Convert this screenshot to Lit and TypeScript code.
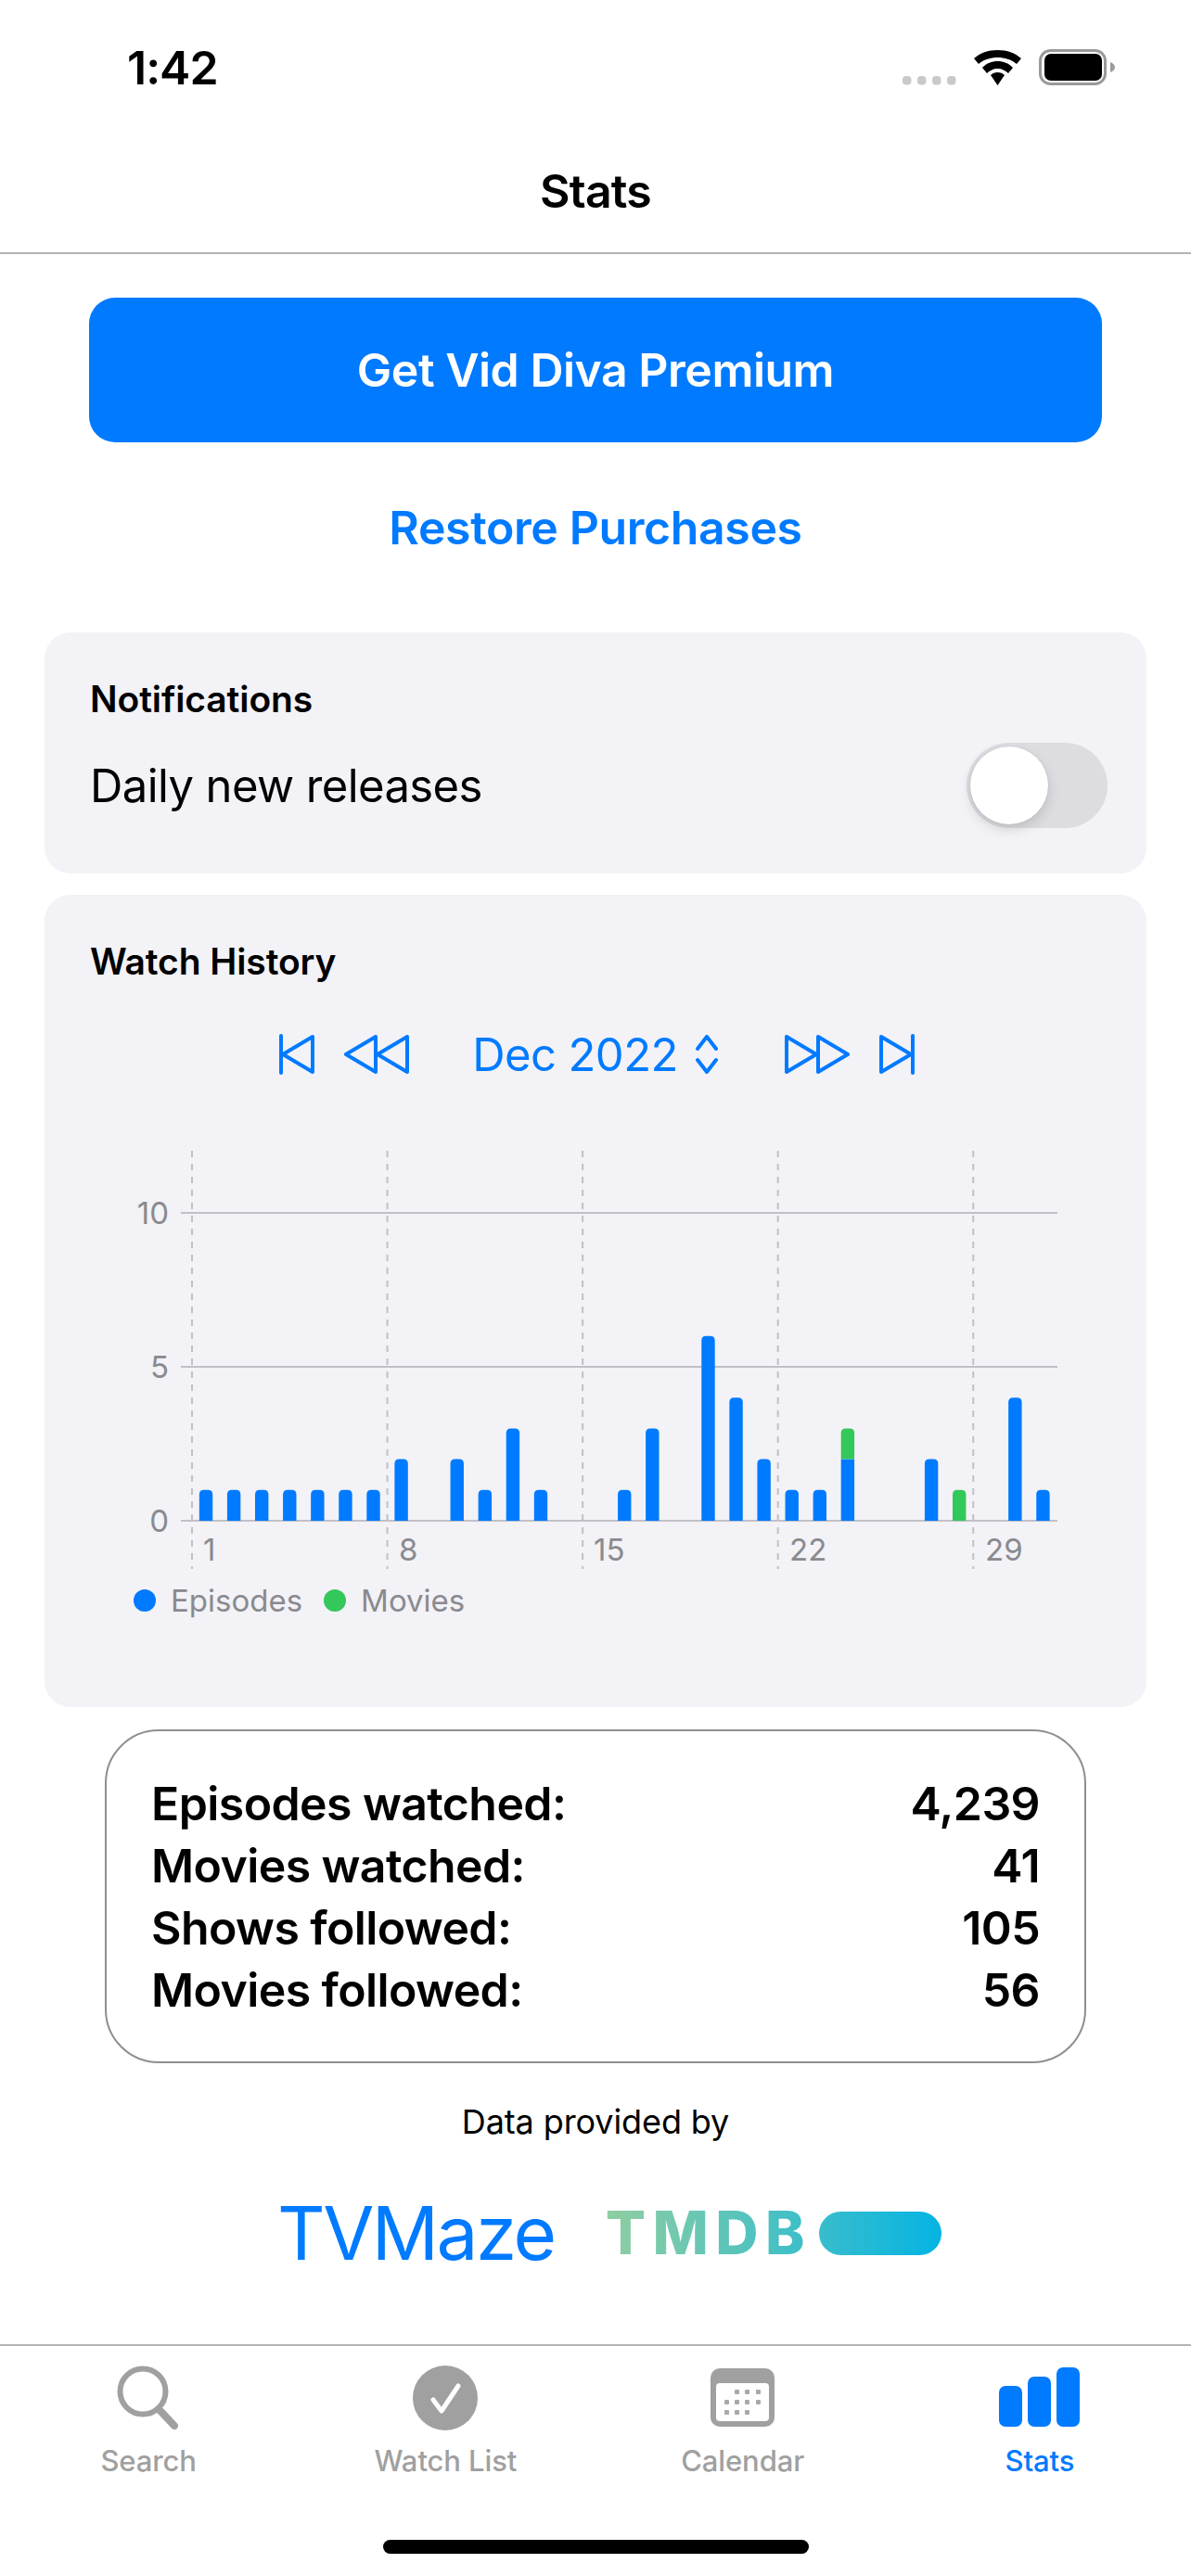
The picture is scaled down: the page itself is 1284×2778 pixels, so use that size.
import { LitElement, css, html, svg } from "lit";
import { customElement } from "lit/decorators.js";

// episodes / movies per day of December
const DAYS: [number, number][] = [
  [1, 0], [1, 0], [1, 0], [1, 0], [1, 0], [1, 0], [1, 0], [2, 0], [0, 0], [2, 0],
  [1, 0], [3, 0], [1, 0], [0, 0], [0, 0], [1, 0], [3, 0], [0, 0], [6, 0], [4, 0],
  [2, 0], [1, 0], [1, 0], [2, 1], [0, 0], [0, 0], [2, 0], [0, 1], [0, 0], [4, 0], [1, 0],
];

const TOTALS = [
  ["Episodes watched:", "4,239"],
  ["Movies watched:", "41"],
  ["Shows followed:", "105"],
  ["Movies followed:", "56"],
];

// chart geometry, svg origin sits at 130,1240 of the page
const UNIT = 33.2;
const BASE = 400;
const LEFT = 77;
const STEP = 30.08;
const BAR = 14.4;

function topRounded(x: number, y: number, h: number) {
  const r = 5;
  return `M${x} ${y + h}V${y + r}Q${x} ${y} ${x + r} ${y}H${x + BAR - r}Q${x + BAR} ${y} ${x + BAR} ${y + r}V${y + h}Z`;
}

@customElement("app-root")
export class AppRoot extends LitElement {
  static styles = css`
    :host {
      display: flex;
      flex-direction: column;
      width: 1284px;
      height: 2778px;
      background: #fff;
      color: #000;
      font-family: Inter, "Liberation Sans", sans-serif;
    }
    .status {
      display: flex;
      justify-content: space-between;
      align-items: flex-start;
      height: 176px;
      padding: 45px 81px 0 137px;
      box-sizing: border-box;
    }
    .time {
      font-size: 50px;
      font-weight: 600;
      line-height: 56px;
      letter-spacing: -1px;
    }
    .status-icons {
      display: block;
      margin-top: 8px;
    }
    .title {
      height: 99px;
      box-sizing: border-box;
      border-bottom: 2px solid #b4b4b6;
      text-align: center;
      font-size: 50px;
      font-weight: 600;
      line-height: 62px;
      margin-top: -1px;
      letter-spacing: -0.8px;
    }
    main {
      flex: 1;
      display: flex;
      flex-direction: column;
      padding: 47px 48px 0;
    }
    .premium {
      margin: 0 48px;
      height: 156px;
      border-radius: 28px;
      background: #007aff;
      color: #fff;
      display: flex;
      align-items: center;
      justify-content: center;
      font-size: 50px;
      font-weight: 600;
      letter-spacing: -0.5px;
    }
    .restore {
      margin-top: 62px;
      height: 60px;
      line-height: 60px;
      text-align: center;
      color: #007aff;
      font-size: 50px;
      font-weight: 600;
      letter-spacing: -0.4px;
    }
    .card {
      background: #f2f2f7;
      border-radius: 28px;
      box-sizing: border-box;
    }
    .notif {
      margin-top: 83px;
      height: 260px;
      padding: 50px 42px 0 49px;
    }
    .card-title {
      font-size: 39px;
      font-weight: 560;
      line-height: 44px;
      letter-spacing: -0.1px;
    }
    .notif-row {
      display: flex;
      justify-content: space-between;
      align-items: center;
      margin-top: 25px;
      font-size: 49px;
      letter-spacing: -0.6px;
    }
    .toggle {
      width: 152px;
      height: 92px;
      border-radius: 46px;
      background: #dcdce1;
      padding: 4px;
      box-sizing: border-box;
    }
    .thumb {
      width: 84px;
      height: 84px;
      border-radius: 50%;
      background: #fff;
      box-shadow: 0 6px 14px rgba(0, 0, 0, 0.13), 0 0 2px rgba(0, 0, 0, 0.1);
    }
    .history {
      margin-top: 23px;
      height: 876px;
      padding: 50px 0 0 49px;
    }
    .month {
      display: flex;
      align-items: center;
      justify-content: center;
      margin: 54px 0 0 -49px;
      padding-left: 3px;
      height: 48px;
      color: #007aff;
      font-size: 49px;
      letter-spacing: -0.6px;
    }
    .month svg {
      display: block;
      fill: none;
      stroke: #007aff;
      stroke-width: 4;
      stroke-linecap: round;
      stroke-linejoin: round;
    }
    .gap-s { margin-left: 31px; }
    .gap-l { margin-left: 68px; }
    .gap-c { margin-left: 18px; }
    .gap-r { margin-left: 71px; }
    .chart {
      display: block;
      margin: 79px 0 0 33px;
    }
    .chart text {
      font-family: Inter, "Liberation Sans", sans-serif;
      font-size: 33px;
      fill: #8a8a8e;
    }
    .legend {
      display: flex;
      align-items: center;
      margin: 12px 0 0 47px;
      height: 40px;
      color: #8a8a8e;
      font-size: 33px;
    }
    .dot {
      width: 24px;
      height: 24px;
      border-radius: 50%;
      margin-right: 16px;
    }
    .dot.ep { background: #007aff; }
    .dot.mov { background: #34c759; margin-left: 23px; }
    .totals {
      margin: 24px 65px 0 65px;
      height: 360px;
      box-sizing: border-box;
      border: 2px solid #8e8e93;
      border-radius: 58px;
      padding: 45px 48px 0 48px;
      font-size: 50px;
      font-weight: 600;
      letter-spacing: -0.6px;
      line-height: 67px;
    }
    .total {
      display: flex;
      justify-content: space-between;
    }
    .credit {
      margin-top: 41px;
      text-align: center;
      font-size: 36px;
      line-height: 44px;
      letter-spacing: -0.1px;
    }
    .logos {
      display: flex;
      align-items: center;
      margin: 50px 0 0 251px;
    }
    .tvmaze {
      color: #007aff;
      font-size: 80px;
      line-height: 96px;
      letter-spacing: -2.5px;
    }
    .tmdb {
      display: flex;
      align-items: center;
      margin-left: 55px;
      background: linear-gradient(90deg, #90cea1, #3cbec9 60%, #00b3e5);
      -webkit-background-clip: text;
      background-clip: text;
      color: transparent;
      font-size: 64px;
      font-weight: 800;
      letter-spacing: 7.5px;
      line-height: 48px;
    }
    .pill {
      width: 132px;
      height: 47px;
      border-radius: 24px;
      margin-left: 8px;
      background: linear-gradient(90deg, #38bdcc, #04b4e3);
    }
    .tabs {
      display: grid;
      grid-template-columns: repeat(4, 1fr);
      height: 250px;
      box-sizing: border-box;
      border-top: 2px solid #b4b4b6;
      padding-right: 3px;
      position: relative;
    }
    .tab {
      display: flex;
      flex-direction: column;
      align-items: center;
      color: #a0a0a0;
      font-size: 31px;
      font-weight: 500;
      letter-spacing: -0.1px;
    }
    .tab.on { color: #007aff; }
    .tab .icon {
      height: 72px;
      margin-top: 20px;
      display: block;
    }
    .tab span {
      margin-top: 12px;
      line-height: 40px;
    }
    .home {
      position: absolute;
      left: 413px;
      top: 209px;
      width: 459px;
      height: 15px;
      border-radius: 8px;
      background: #000;
    }
  `;

  chart() {
    return html`<svg class="chart" width="1020" height="454" viewBox="0 0 1020 454">
      ${[0, 7, 14, 21, 28].map((d) => {
        const x = LEFT + d * STEP;
        return svg`<line x1=${x} x2=${x} y1="1" y2="452" stroke="#c0c0c5" stroke-width="2" stroke-dasharray="7 7"/>`;
      })}
      ${[0, 5, 10].map((v) => {
        const y = BASE - v * UNIT;
        return svg`<line x1="65" x2="1010" y1=${y} y2=${y} stroke="#c0c0c6" stroke-width="2"/>
          <text x="52" y=${y + 12} text-anchor="end">${v}</text>`;
      })}
      ${DAYS.map(([ep, mov], i) => {
        const x = LEFT + (i + 0.5) * STEP - BAR / 2;
        const total = ep + mov;
        if (!total) return null;
        const y = BASE - total * UNIT;
        if (!mov) return svg`<path d=${topRounded(x, y, ep * UNIT)} fill="#007aff"/>`;
        if (!ep) return svg`<path d=${topRounded(x, y, mov * UNIT)} fill="#34c759"/>`;
        return svg`<path d=${topRounded(x, y, mov * UNIT)} fill="#34c759"/>
          <rect x=${x} y=${y + mov * UNIT} width=${BAR} height=${ep * UNIT} fill="#007aff"/>`;
      })}
      ${[[1, 89], [8, 300], [15, 510], [22, 721], [29, 932]].map(
        ([d, x]) => svg`<text x=${x} y="443">${d}</text>`
      )}
    </svg>`;
  }

  render() {
    return html`
      <div class="status">
        <div class="time">1:42</div>
        <svg class="status-icons" width="232" height="42" viewBox="0 0 232 42">
          <g fill="#c9c9c9">
            <rect x="2" y="29" width="9.500" height="9.500" rx="4"/>
            <rect x="18" y="29" width="9.500" height="9.500" rx="4"/>
            <rect x="34" y="29" width="9.500" height="9.500" rx="4"/>
            <rect x="50" y="29" width="9.500" height="9.500" rx="4"/>
          </g>
          <g fill="#000">
            <path d="M104.500 1C94 1 86 4 79 10L84 16C90 11 97 9 104.500 9C112 9 119 11 125 16L130 10C123 4 115 1 104.500 1Z"/>
            <path d="M104.500 13C98 13 93 15 88 20L93 26C96 23 100 21 104.500 21C109 21 113 23 116 26L121 20C116 15 111 13 104.500 13Z"/>
            <path d="M104.500 25C101.500 25 99 26 97 28L104.500 39L112 28C110 26 107.500 25 104.500 25Z"/>
          </g>
          <rect x="150.500" y="1.500" width="70" height="36" rx="11" fill="none" stroke="#9a9a9a" stroke-width="3"/>
          <rect x="155" y="5" width="62" height="29" rx="7" fill="#000"/>
          <path d="M226 14C229 15 231 17 231 19.500C231 22 229 24 226 25Z" fill="#9a9a9a"/>
        </svg>
      </div>
      <div class="title">Stats</div>
      <main>
        <div class="premium">Get Vid Diva Premium</div>
        <div class="restore">Restore Purchases</div>
        <section class="card notif">
          <div class="card-title">Notifications</div>
          <div class="notif-row">
            <span>Daily new releases</span>
            <div class="toggle"><div class="thumb"></div></div>
          </div>
        </section>
        <section class="card history">
          <div class="card-title">Watch History</div>
          <div class="month">
            <svg width="39" height="44" viewBox="0 0 39 44"><path d="M2 2V42M36 3V41L4 22Z"/></svg>
            <svg class="gap-s" width="70" height="44" viewBox="0 0 70 44"><path d="M34 3V41L2 22ZM68 3V41L36 22Z"/></svg>
            <span class="gap-l">Dec 2022</span>
            <svg class="gap-c" width="26" height="42" viewBox="0 0 26 42"><path d="M3 15L13 2L23 15M3 27L13 40L23 27"/></svg>
            <svg class="gap-r" width="70" height="44" viewBox="0 0 70 44"><path d="M2 3V41L34 22ZM36 3V41L68 22Z"/></svg>
            <svg class="gap-s" width="39" height="44" viewBox="0 0 39 44"><path d="M37 2V42M3 3V41L35 22Z"/></svg>
          </div>
          ${this.chart()}
          <div class="legend">
            <i class="dot ep"></i><span>Episodes</span>
            <i class="dot mov"></i><span>Movies</span>
          </div>
        </section>
        <section class="totals">
          ${TOTALS.map(([k, v]) => html`<div class="total"><span>${k}</span><span>${v}</span></div>`)}
        </section>
        <div class="credit">Data provided by</div>
        <div class="logos">
          <span class="tvmaze">TVMaze</span>
          <div class="tmdb">TMDB<i class="pill"></i></div>
        </div>
      </main>
      <nav class="tabs">
        <div class="tab">
          <svg class="icon" width="70" height="72" viewBox="0 0 70 72" fill="none" stroke="#a0a0a0">
            <circle cx="29" cy="29" r="24.500" stroke-width="6"/>
            <path d="M46 48L63 66" stroke-width="8" stroke-linecap="round"/>
          </svg>
          <span>Search</span>
        </div>
        <div class="tab">
          <svg class="icon" width="70" height="72" viewBox="0 0 70 72">
            <circle cx="35" cy="36" r="35" fill="#a0a0a0"/>
            <path d="M22 38L31 50L49 23" fill="none" stroke="#fff" stroke-width="5" stroke-linecap="round" stroke-linejoin="round"/>
          </svg>
          <span>Watch List</span>
        </div>
        <div class="tab">
          <svg class="icon" width="70" height="72" viewBox="0 0 70 72">
            <rect x="0" y="4" width="69" height="63" rx="10" fill="#a0a0a0"/>
            <rect x="6" y="20" width="57" height="41" rx="4" fill="#fff"/>
            <g fill="#a9a9a9">
              <rect x="26" y="27" width="5" height="5" rx="1"/><rect x="37" y="27" width="5" height="5" rx="1"/><rect x="49" y="27" width="5" height="5" rx="1"/>
              <rect x="15" y="38" width="5" height="5" rx="1"/><rect x="26" y="38" width="5" height="5" rx="1"/><rect x="37" y="38" width="5" height="5" rx="1"/><rect x="49" y="38" width="5" height="5" rx="1"/>
              <rect x="15" y="49" width="5" height="5" rx="1"/><rect x="26" y="49" width="5" height="5" rx="1"/><rect x="37" y="49" width="5" height="5" rx="1"/>
            </g>
          </svg>
          <span>Calendar</span>
        </div>
        <div class="tab on">
          <svg class="icon" width="87" height="72" viewBox="0 0 87 72" fill="#007aff">
            <rect x="0" y="23" width="25" height="44" rx="7"/>
            <rect x="31" y="13" width="25" height="54" rx="7"/>
            <rect x="62" y="3" width="25" height="64" rx="7"/>
          </svg>
          <span>Stats</span>
        </div>
        <div class="home"></div>
      </nav>
    `;
  }
}
